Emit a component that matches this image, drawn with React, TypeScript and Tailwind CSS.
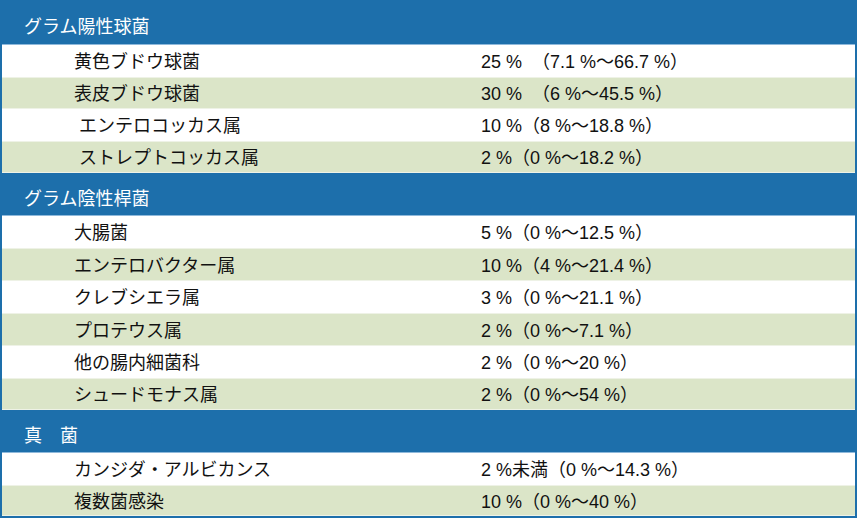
// Table of bacteria detection rates grouped by category.

type Row = { name: string; rate: string; h: string };
type Group = { title: string; h: string; rows: Row[] };

const groups: Group[] = [
  {
    title: "グラム陽性球菌",
    h: "h-[45px]",
    rows: [
      { name: "黄色ブドウ球菌", rate: "25 %  （7.1 %〜66.7 %）", h: "h-[32px]" },
      { name: "表皮ブドウ球菌", rate: "30 %  （6 %〜45.5 %）", h: "h-[32px]" },
      { name: " エンテロコッカス属", rate: "10 %（8 %〜18.8 %）", h: "h-[32px]" },
      { name: " ストレプトコッカス属", rate: "2 %（0 %〜18.2 %）", h: "h-[32px]" },
    ],
  },
  {
    title: "グラム陰性桿菌",
    h: "h-[43px]",
    rows: [
      { name: "大腸菌", rate: "5 %（0 %〜12.5 %）", h: "h-[32px]" },
      { name: "エンテロバクター属", rate: "10 %（4 %〜21.4 %）", h: "h-[33px]" },
      { name: "クレブシエラ属", rate: "3 %（0 %〜21.1 %）", h: "h-[32px]" },
      { name: "プロテウス属", rate: "2 %（0 %〜7.1 %）", h: "h-[33px]" },
      { name: "他の腸内細菌科", rate: "2 %（0 %〜20 %）", h: "h-[32px]" },
      { name: "シュードモナス属", rate: "2 %（0 %〜54 %）", h: "h-[32px]" },
    ],
  },
  {
    title: "真　菌",
    h: "h-[43px]",
    rows: [
      { name: "カンジダ・アルビカンス", rate: "2 %未満（0 %〜14.3 %）", h: "h-[32px]" },
      { name: "複数菌感染", rate: "10 %（0 %〜40 %）", h: "h-[31px]" },
    ],
  },
];

export default function App() {
  return (
    <div
      className="w-[858px] h-[520px] bg-white text-[18px] text-[#111]"
      style={{ fontFamily: '"Liberation Sans", "Noto Sans CJK JP", sans-serif' }}
    >
      <div className="w-[857px] border-x-2 border-b-2 border-[#1d6fab]">
        {groups.map((group) => (
          <div key={group.title}>
            <div
              className={`flex ${group.h} items-center border-b border-[#8fb9db] bg-[#1d6fab] pl-[22px] pt-[10px] text-white`}
            >
              {group.title}
            </div>
            {group.rows.map((row, i) => (
              <div
                key={row.name}
                className={
                  i % 2 === 0
                    ? `grid ${row.h} grid-cols-[479px_1fr] items-center bg-white pt-[3px]`
                    : `grid ${row.h} grid-cols-[479px_1fr] items-center border-y border-[#eef2e6] bg-[#dbe5c8] pt-[3px]`
                }
              >
                <span className="whitespace-pre pl-[72px]">{row.name}</span>
                <span className="whitespace-pre">{row.rate}</span>
              </div>
            ))}
          </div>
        ))}
      </div>
    </div>
  );
}
